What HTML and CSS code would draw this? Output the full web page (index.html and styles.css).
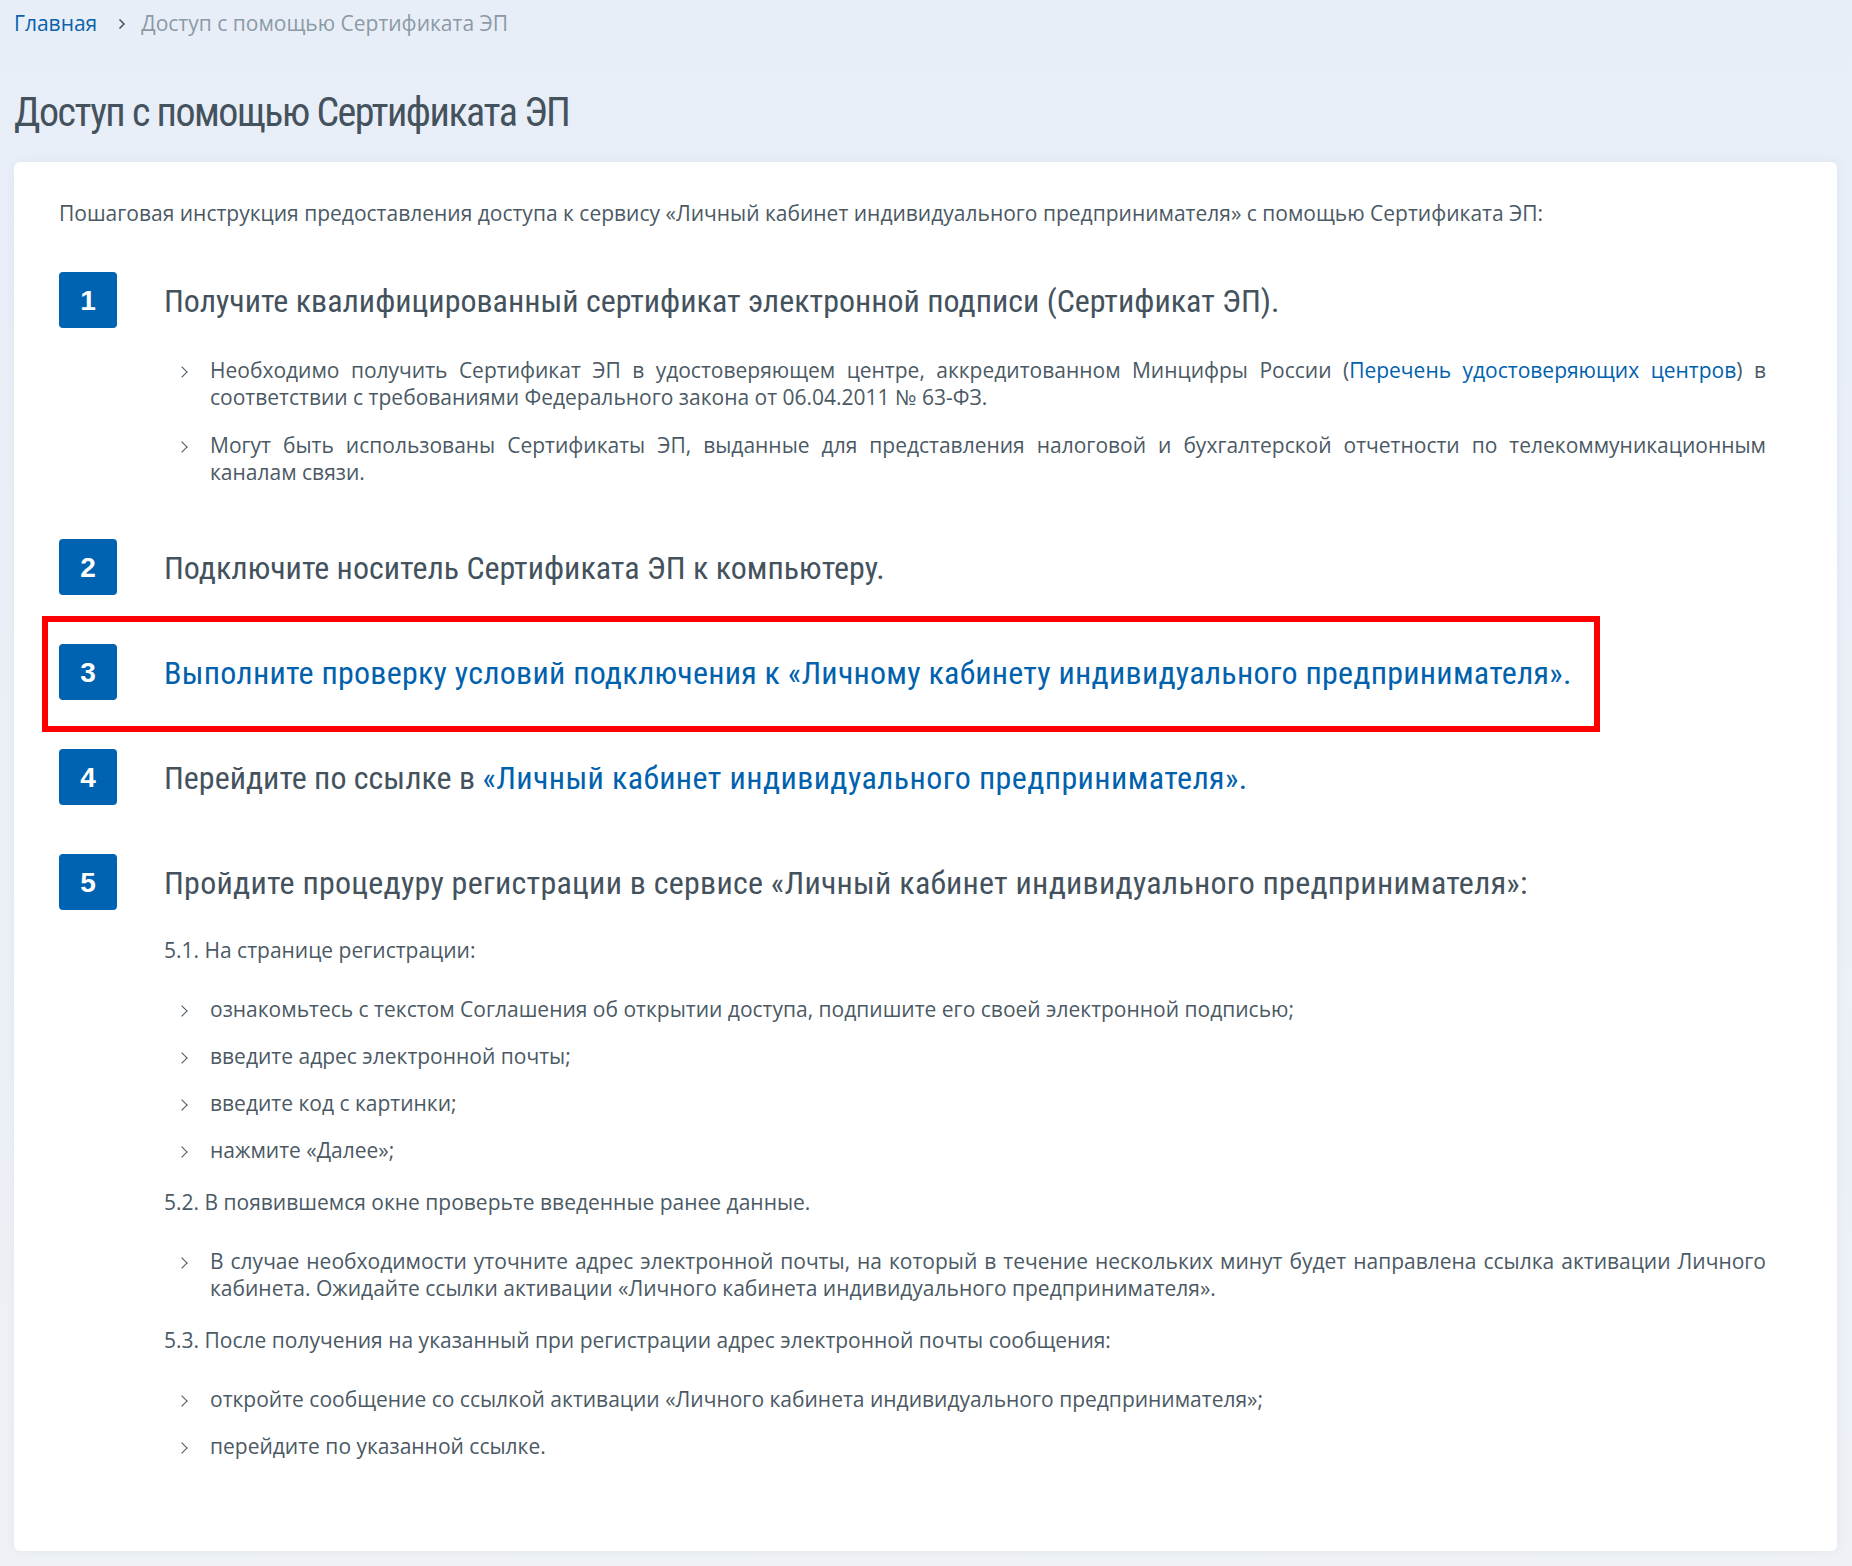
FILE: index.html
```html
<!DOCTYPE html>
<html lang="ru">
<head>
<meta charset="utf-8">
<title>Доступ с помощью Сертификата ЭП</title>
<link rel="stylesheet" href="styles.css">
</head>
<body>
<div class="page">
  <nav class="breadcrumb">
    <a class="crumb-link" href="#">Главная</a>
    <svg class="crumb-sep" width="8" height="12" viewBox="0 0 8 12"><path d="M1.5 1.5 L6 6 L1.5 10.5" fill="none" stroke="#4a5863" stroke-width="1.6"/></svg>
    <span class="crumb-current">Доступ с помощью Сертификата ЭП</span>
  </nav>
  <h1 class="title">Доступ с помощью Сертификата ЭП</h1>

  <main class="card">
    <p class="intro">Пошаговая инструкция предоставления доступа к сервису «Личный кабинет индивидуального предпринимателя» с помощью Сертификата ЭП:</p>

    <section class="step">
      <div class="num">1</div>
      <h2 class="step-title">Получите квалифицированный сертификат электронной подписи (Сертификат ЭП).</h2>
      <div class="step-body">
        <ul class="list list-first">
          <li>Необходимо получить Сертификат ЭП в удостоверяющем центре, аккредитованном Минцифры России (<a href="#">Перечень удостоверяющих центров</a>) в соответствии с требованиями Федерального закона от 06.04.2011 № 63-ФЗ.</li>
          <li>Могут быть использованы Сертификаты ЭП, выданные для представления налоговой и бухгалтерской отчетности по телекоммуникационным каналам связи.</li>
        </ul>
      </div>
    </section>

    <section class="step">
      <div class="num">2</div>
      <h2 class="step-title">Подключите носитель Сертификата ЭП к компьютеру.</h2>
    </section>

    <section class="step step-marked">
      <div class="num">3</div>
      <h2 class="step-title"><a href="#" class="quoted">Выполните проверку условий подключения к «Личному кабинету индивидуального предпринимателя».</a></h2>
      <div class="mark"></div>
    </section>

    <section class="step">
      <div class="num">4</div>
      <h2 class="step-title">Перейдите по ссылке в <a href="#" class="quoted quoted-link">«Личный кабинет индивидуального предпринимателя».</a></h2>
    </section>

    <section class="step step-last">
      <div class="num">5</div>
      <h2 class="step-title"><span class="quoted">Пройдите процедуру регистрации в сервисе «Личный кабинет индивидуального предпринимателя»:</span></h2>
      <div class="step-body">
        <p class="sub">5.1. На странице регистрации:</p>
        <ul class="list">
          <li>ознакомьтесь с текстом Соглашения об открытии доступа, подпишите его своей электронной подписью;</li>
          <li>введите адрес электронной почты;</li>
          <li>введите код с картинки;</li>
          <li>нажмите «Далее»;</li>
        </ul>
        <p class="sub">5.2. В появившемся окне проверьте введенные ранее данные.</p>
        <ul class="list">
          <li>В случае необходимости уточните адрес электронной почты, на который в течение нескольких минут будет направлена ссылка активации Личного кабинета. Ожидайте ссылки активации «Личного кабинета индивидуального предпринимателя».</li>
        </ul>
        <p class="sub">5.3. После получения на указанный при регистрации адрес электронной почты сообщения:</p>
        <ul class="list">
          <li>откройте сообщение со ссылкой активации «Личного кабинета индивидуального предпринимателя»;</li>
          <li>перейдите по указанной ссылке.</li>
        </ul>
      </div>
    </section>
  </main>
</div>
</body>
</html>
```
FILE: styles.css
```css
* { box-sizing: border-box; }

html, body {
  margin: 0;
  padding: 0;
}

body {
  min-height: 1566px;
  background: linear-gradient(180deg, #e8eef8 0%, #ebf0f7 50%, #eef1f6 100%);
  font-family: "Open Sans", "Noto Sans", sans-serif;
  color: #4b5964;
}

a {
  color: #0061ad;
  text-decoration: none;
}

.page {
  padding: 9px 15px 16px 14px;
}

/* breadcrumb */
.breadcrumb {
  display: flex;
  align-items: center;
  height: 28px;
  font-size: 21px;
  line-height: 28px;
}

.crumb-link {
  color: #0a62ab;
}

.crumb-sep {
  margin: 1px 15px 0 21px;
  flex: none;
}

.crumb-current {
  color: #8b9aa5;
}

/* title */
.title {
  margin: 51px 0 24px 0;
  font-family: "Roboto Condensed", "PT Sans Narrow", "Liberation Sans", sans-serif;
  font-weight: 400;
  font-size: 40px;
  line-height: 50px;
  color: #44525d;
  letter-spacing: -1.5px;
}

/* card */
.card {
  display: block;
  background: #ffffff;
  border-radius: 6px;
  box-shadow: 0 0 12px rgba(60, 80, 110, 0.06);
  padding: 38px 71px 91px 45px;
}

.intro {
  margin: 0 0 45px 0;
  font-size: 21px;
  line-height: 27px;
}

/* steps */
.step {
  display: grid;
  grid-template-columns: 58px 1fr;
  column-gap: 47px;
  margin-bottom: 49px;
}

.step-last {
  margin-bottom: 0;
}

.step-marked {
  position: relative;
}

.num {
  width: 58px;
  height: 56px;
  border-radius: 4px;
  background: #0063b1;
  color: #ffffff;
  font-family: "Liberation Sans", Arial, sans-serif;
  font-weight: 700;
  font-size: 28px;
  line-height: 56px;
  text-align: center;
  padding-top: 1px;
}

.step-title {
  margin: 0;
  padding-top: 3px;
  font-family: "Roboto Condensed", "PT Sans Narrow", "Liberation Sans", sans-serif;
  font-weight: 400;
  font-size: 32px;
  line-height: 53px;
  color: #44525d;
  white-space: nowrap;
}

.quoted {
  letter-spacing: 0.25px;
}

.quoted-link {
  letter-spacing: 0.4px;
}

.step-body {
  grid-column: 2;
  padding-top: 27px;
}

.sub {
  margin: 0;
  font-size: 21px;
  line-height: 27px;
}

.list + .sub {
  margin-top: 25px;
}

.list {
  list-style: none;
  margin: 32px 0 0 0;
  padding: 0;
}

.list-first {
  margin: 2px 0 4px 0;
}

.list li {
  position: relative;
  padding-left: 46px;
  margin-bottom: 20px;
  font-size: 21px;
  line-height: 27px;
  text-align: justify;
}

.list-first li {
  margin-bottom: 21px;
}

.list li:last-child {
  margin-bottom: 0;
}

.list li::before {
  content: "";
  position: absolute;
  left: 14px;
  top: 11px;
  width: 7px;
  height: 7px;
  border-right: 1.6px solid #4a5863;
  border-top: 1.6px solid #4a5863;
  transform: rotate(45deg);
}

/* annotation frame */
.mark {
  position: absolute;
  left: -17px;
  top: -28px;
  width: 1558px;
  height: 116px;
  border: 6px solid #ff0000;
  pointer-events: none;
}
```
